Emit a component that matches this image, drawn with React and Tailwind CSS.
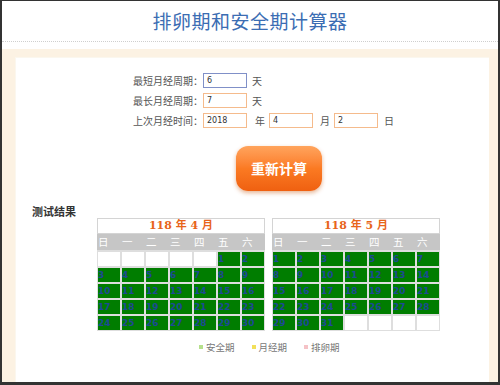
const april = [...Array(5).fill(null), ...Array.from({ length: 30 }, (_, i) => i + 1)];
const may = [...Array.from({ length: 31 }, (_, i) => i + 1), ...Array(4).fill(null)];
const week = ["日", "一", "二", "三", "四", "五", "六"];

const cjk = { fontFamily: '"Noto Sans CJK SC", "Noto Sans", sans-serif' };

function Field({ value, focused, className = "" }) {
  return (
    <div
      className={`w-[44px] h-[15px] border bg-white pl-[3px] text-[8px] leading-[13px] text-[#333] ${
        focused ? "border-[#8090c8]" : "border-[#f5bb8c]"
      } ${className}`}
      style={{ fontFamily: '"DejaVu Sans", sans-serif' }}
    >
      {value}
    </div>
  );
}

function Calendar({ title, days }) {
  return (
    <div className="w-[168px]">
      <div
        className="h-[16px] border border-[#d4d4d4] bg-white text-center text-[11px] leading-[14px] font-bold text-[#e8641a]"
        style={{ fontFamily: '"DejaVu Serif", "Noto Sans CJK SC", serif' }}
      >
        {title}
      </div>
      <div className="grid grid-cols-7 gap-x-[2px] bg-[#c6c6c6] h-[16px] px-[1px]">
        {week.map((w) => (
          <div key={w} className="text-[10.5px] leading-[16px] text-white" style={cjk}>
            {w}
          </div>
        ))}
      </div>
      <div className="grid grid-cols-7 gap-[2px] bg-[#dedede] p-[1px] pt-[2px]">
        {days.map((d, i) =>
          d ? (
            <div
              key={i}
              className="h-[14px] bg-[#007d00] text-[9px] leading-[14px] font-bold text-[#1d4a94]"
              style={{ fontFamily: '"DejaVu Sans", sans-serif' }}
            >
              {d}
            </div>
          ) : (
            <div key={i} className="h-[14px] bg-white" />
          )
        )}
      </div>
    </div>
  );
}

export default function App() {
  return (
    <div className="w-[500px] h-[385px] bg-white border-x-2 border-t border-b-[3px] border-[#333] flex flex-col overflow-hidden" style={cjk}>
      {/* Title */}
      <div className="h-[41px] flex items-center justify-center border-b border-dotted border-[#cfcfcf]">
        <h1 className="text-[19px] text-[#3b6db3] tracking-[0.5px]">排卵期和安全期计算器</h1>
      </div>

      <div className="mt-[7px] flex-1 bg-[#fcf2e3] pl-[13px] pr-[9px] pt-[8px] flex">
        <div className="flex-1 bg-white border-l border-t border-[#fbf7ee] flex flex-col">
          {/* Form */}
          <div className="pt-[15px] pl-[114px] flex flex-col gap-[5px] text-[10px] text-[#555]">
            <div className="flex items-center h-[15px]">
              <span className="w-[73px] text-right">最短月经周期：</span>
              <Field value="6" focused />
              <span className="ml-[5px]">天</span>
            </div>
            <div className="flex items-center h-[15px]">
              <span className="w-[73px] text-right">最长月经周期：</span>
              <Field value="7" />
              <span className="ml-[5px]">天</span>
            </div>
            <div className="flex items-center h-[15px]">
              <span className="w-[73px] text-right">上次月经时间：</span>
              <Field value="2018" />
              <span className="ml-[8px] mr-[4px]">年</span>
              <Field value="4" />
              <span className="ml-[7px] mr-[4px]">月</span>
              <Field value="2" />
              <span className="ml-[6px]">日</span>
            </div>
          </div>

          {/* Button */}
          <div className="mt-[18px] ml-[220px]">
            <button className="w-[86px] h-[45px] rounded-[12px] bg-gradient-to-b from-[#ffa45c] via-[#fb7a22] to-[#ef6010] text-white text-[14px] font-semibold shadow-[0_2px_4px_rgba(200,90,20,0.45)]">
              重新计算
            </button>
          </div>

          {/* Results */}
          <div className="mt-[13px] pl-[16px] text-[11px] font-bold text-[#333] leading-[14px]">测试结果</div>
          <div className="pl-[81px] flex gap-[7px]">
            <Calendar title="118 年 4 月" days={april} />
            <Calendar title="118 年 5 月" days={may} />
          </div>

          {/* Legend */}
          <div className="mt-[9px] pl-[183px] flex items-center text-[9.5px] text-[#777]">
            <span className="w-[4px] h-[4px] bg-[#b6e08c] mr-[3px]" />
            <span>安全期</span>
            <span className="w-[4px] h-[4px] bg-[#f2e05a] ml-[17px] mr-[3px]" />
            <span>月经期</span>
            <span className="w-[4px] h-[4px] bg-[#f5c2c6] ml-[17px] mr-[3px]" />
            <span>排卵期</span>
          </div>
        </div>
      </div>
    </div>
  );
}
